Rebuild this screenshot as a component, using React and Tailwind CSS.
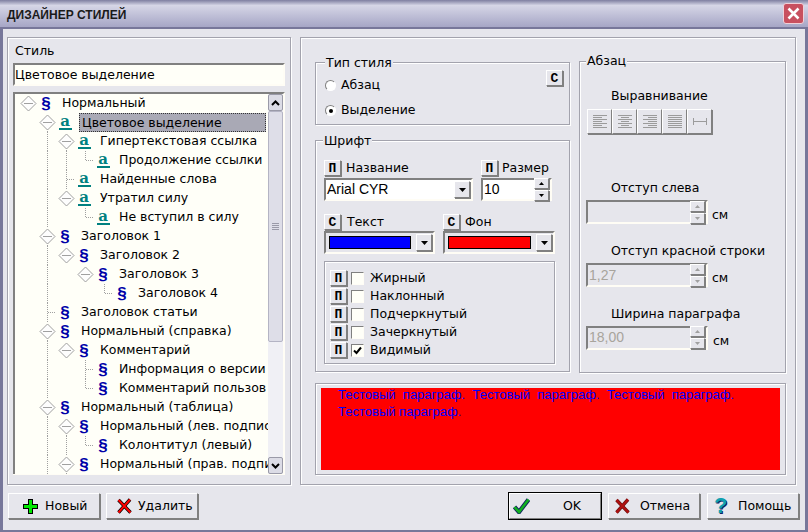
import React from 'react';

const raised = 'border border-t-white border-l-white border-r-[#808080] border-b-[#808080] shadow-[1px_1px_0_#808080] bg-[#e6e6ec]';
const sunken = 'border-2 border-t-[#808080] border-l-[#808080] border-r-[#fffdf5] border-b-[#fffdf5]';
const groupBox = 'relative border border-[#a3a3ad] shadow-[inset_1px_1px_0_#fff,1px_1px_0_#fff]';

const rows = [
  { t: 'Нормальный', k: 's', l: 0, n: true },
  { t: 'Цветовое выделение', k: 'a', l: 1, n: true, sel: true },
  { t: 'Гипертекстовая ссылка', k: 'a', l: 2, n: true },
  { t: 'Продолжение ссылки', k: 'a', l: 3 },
  { t: 'Найденные слова', k: 'a', l: 2 },
  { t: 'Утратил силу', k: 'a', l: 2, n: true },
  { t: 'Не вступил в силу', k: 'a', l: 3 },
  { t: 'Заголовок 1', k: 's', l: 1, n: true },
  { t: 'Заголовок 2', k: 's', l: 2, n: true },
  { t: 'Заголовок 3', k: 's', l: 3, n: true },
  { t: 'Заголовок 4', k: 's', l: 4 },
  { t: 'Заголовок статьи', k: 's', l: 1 },
  { t: 'Нормальный (справка)', k: 's', l: 1, n: true },
  { t: 'Комментарий', k: 's', l: 2, n: true },
  { t: 'Информация о версии', k: 's', l: 3 },
  { t: 'Комментарий пользов', k: 's', l: 3 },
  { t: 'Нормальный (таблица)', k: 's', l: 1, n: true },
  { t: 'Нормальный (лев. подпис', k: 's', l: 2, n: true },
  { t: 'Колонтитул (левый)', k: 's', l: 3 },
  { t: 'Нормальный (прав. подпи', k: 's', l: 2, n: true },
];

// does the guide line of this level carry on below row i
const hasNext = (i, level) => {
  if (level === 0) return false;
  for (let j = i + 1; j < rows.length; j++) {
    if (rows[j].l === level) return true;
    if (rows[j].l < level) return false;
  }
  return true;
};

const Cell = ({ type, down }) => (
  <svg width="19" height="19" className="shrink-0" shapeRendering="crispEdges">
    <g stroke="#a0a0a0" strokeDasharray="1 1" fill="none">
      {type === 'guide' && <path d="M9.5 0V19" />}
      {type === 'leaf' && <path d={down ? 'M9.5 0V19M10 9.5H17' : 'M9.5 0V9.5H17'} />}
      {type === 'node' && down && <path d="M9.5 16V19" />}
    </g>
    {type === 'node' && (
      <g shapeRendering="auto" stroke="#a0a0a0" fill="#fdfdfd">
        <polygon points="2,9.5 9.5,2 17,9.5 9.5,17" />
        <path d="M5 9.5H14" />
      </g>
    )}
  </svg>
);

const TreeRow = ({ row, i }) => {
  const cells = [];
  for (let c = 1; c < row.l; c++) cells.push(<Cell key={c} type={hasNext(i, c) ? 'guide' : 'none'} />);
  return (
    <div className="flex h-[19px] items-center">
      {row.l > 0 && <Cell type="none" />}
      {cells}
      <Cell type={row.n ? 'node' : 'leaf'} down={hasNext(i, row.l)} />
      <span className="flex w-[16px] shrink-0 justify-center">
        {row.k === 's' ? (
          <span className="font-['Liberation_Sans',sans-serif] text-[17px] leading-none font-bold text-[#0000a8]">§</span>
        ) : (
          <span className="block h-[15px] w-[13px] border-b-2 border-[#008080] text-center font-['DejaVu_Serif',serif] text-[15px] leading-[13px] font-bold text-[#008080]">a</span>
        )}
      </span>
      <span className={`ml-[6px] h-[19px] pl-[2px] leading-[18px] whitespace-nowrap ${row.sel ? 'mr-[2px] flex-1 border border-dotted border-[#333] bg-[#a9a9b5] pl-[1px] leading-[16px]' : 'shrink-0'}`}>{row.t}</span>
    </div>
  );
};

const Arrow = ({ d, color = 'black' }) => (
  <svg width="9" height="6" viewBox="0 0 9 6" fill="none" stroke={color} strokeWidth="2"><path d={d} /></svg>
);

const ScrollBtn = ({ d }) => (
  <div className="flex h-[17px] w-[15px] items-center justify-center rounded-[2px] border border-[#9a9aa8] bg-[#dcdce6]">
    <Arrow d={d} />
  </div>
);

const Tiny = ({ up, disabled }) => (
  <div className={`flex h-[11px] w-[15px] items-center justify-center ${raised}`}>
    <svg width="5" height="3" viewBox="0 0 5 3" fill={disabled ? '#a0a0a0' : 'black'}>
      <path d={up ? 'M2.5 0L5 3H0Z' : 'M0 0H5L2.5 3Z'} />
    </svg>
  </div>
);

const Spin = ({ value, disabled, className }) => (
  <div className={`flex items-center justify-between pr-[1px] ${sunken} ${disabled ? '' : 'bg-white'} ${className}`}>
    <span className={`pl-[1px] font-['Liberation_Sans',sans-serif] text-[14px] ${disabled ? 'text-[#a8a49c]' : 'text-black'}`}>{value}</span>
    <div className="flex flex-col gap-[1px]">
      <Tiny up disabled={disabled} />
      <Tiny disabled={disabled} />
    </div>
  </div>
);

const DropBtn = () => (
  <div className={`flex h-[17px] w-[16px] items-center justify-center ${raised}`}>
    <svg width="7" height="4" viewBox="0 0 7 4"><path d="M0 0H7L3.5 4Z" fill="black" /></svg>
  </div>
);

const LetterBtn = ({ c, className = '' }) => (
  <div className={`flex h-[16px] w-[17px] shrink-0 items-center justify-center font-['Liberation_Mono',monospace] text-[13px] leading-none font-bold ${raised} ${className}`}>{c}</div>
);

const ColorCombo = ({ color, className }) => (
  <div className={`flex h-[23px] items-center justify-between pr-[1px] pl-[3px] ${sunken} ${className}`}>
    <div className={`h-[13px] flex-1 border border-black ${color}`} />
    <div className="ml-[5px]"><DropBtn /></div>
  </div>
);

const FontFlag = ({ label, checked }) => (
  <div className="flex h-[18px] items-center">
    <LetterBtn c="П" />
    <div className="ml-[4px] flex h-[13px] w-[13px] items-center justify-center border border-t-[#808080] border-l-[#808080] border-r-[#fffdf5] border-b-[#fffdf5] bg-[#fffff8]">
      {checked && <svg width="9" height="9" viewBox="0 0 9 9" fill="none" stroke="black" strokeWidth="2"><path d="M1 4.5L3.5 7L8 1.5" /></svg>}
    </div>
    <span className="ml-[6px]">{label}</span>
  </div>
);

const Radio = ({ label, on }) => (
  <div className="flex h-[25px] items-center">
    <div className="flex h-[11px] w-[11px] items-center justify-center rounded-full border border-t-[#808080] border-l-[#808080] border-r-white border-b-white bg-white">
      {on && <div className="h-[4px] w-[4px] rounded-full bg-black" />}
    </div>
    <span className="ml-[5px]">{label}</span>
  </div>
);

const AlignIcon = ({ lines }) => (
  <svg width="16" height="15" stroke="#9b9b9b" shapeRendering="crispEdges">
    {lines.map(([a, b], i) => <path key={i} d={`M${a} ${1.5 + i * 2}H${b}`} />)}
  </svg>
);

const alignIcons = [
  [[1, 15], [1, 10], [1, 15], [1, 10], [1, 15], [1, 10], [1, 15]],
  [[1, 15], [4, 12], [1, 15], [4, 12], [1, 15], [4, 12], [1, 15]],
  [[1, 15], [6, 15], [1, 15], [6, 15], [1, 15], [6, 15], [1, 15]],
  [[1, 15], [1, 15], [1, 15], [1, 15], [1, 15], [1, 15], [1, 15]],
];

const ParaField = ({ label, value, unitClass = 'ml-[4px]' }) => (
  <div>
    <div className="h-[16px] pl-[25px] leading-[18px]">{label}</div>
    <div className="mt-[5px] flex items-center">
      <Spin value={value} disabled className="h-[24px] w-[122px]" />
      <span className={`${unitClass} mt-[6px]`}>см</span>
    </div>
  </div>
);

const Button = ({ icon, children, className = '', textClass = '' }) => (
  <div className={`flex h-[26px] w-[92px] items-center ${raised} ${className}`}>
    {icon}
    <span className={`pt-[1px] ${textClass}`}>{children}</span>
  </div>
);

const PlusIcon = () => (
  <svg width="17" height="17" viewBox="0 0 17 17" className="ml-[13px]" shapeRendering="crispEdges">
    <path d="M6.5 1.5H10.5V6.5H15.5V10.5H10.5V15.5H6.5V10.5H1.5V6.5H6.5Z" fill="#00e800" stroke="black" />
  </svg>
);

const CrossIcon = ({ color, stroke, className }) => (
  <svg width="15" height="16" viewBox="0 0 15 16" className={className}>
    <path d="M1.5 2L13.5 14.5M13 1.5L1.5 14.5" stroke={stroke} strokeWidth="3.4" fill="none" />
    <path d="M1.5 2L13.5 14.5M13 1.5L1.5 14.5" stroke={color} strokeWidth="2" fill="none" />
  </svg>
);

const CheckIcon = () => (
  <svg width="17" height="16" viewBox="0 0 17 16" className="ml-[3px]">
    <path d="M1.5 9L6 14L15.5 1.5" stroke="#102060" strokeWidth="4.4" fill="none" />
    <path d="M1.5 9L6 14L15.5 1.5" stroke="#10b020" strokeWidth="2.6" fill="none" />
  </svg>
);

export default function App() {
  return (
    <div className="flex h-[532px] w-[808px] flex-col overflow-hidden bg-[#e6e6ec] font-['DejaVu_Sans',sans-serif] text-[12.5px] text-black">
      <div className="flex h-[29px] shrink-0 items-center justify-between border-b-2 border-[#77779a] bg-gradient-to-b from-[#7f7fa0] via-[#d6d6e6] via-20% to-[#a6a6c6] pr-[4px] pl-[7px]">
        <span className="mt-[3px] font-['Liberation_Sans',sans-serif] text-[12px] font-bold text-[#1a1a1a]">ДИЗАЙНЕР СТИЛЕЙ</span>
        <div className="flex h-[21px] w-[21px] items-center justify-center rounded-[3px] border border-[#f0d0d8] bg-[#c8505f]">
          <svg width="13" height="13" viewBox="0 0 13 13"><path d="M1.5 1.5L11.5 11.5M11.5 1.5L1.5 11.5" stroke="white" strokeWidth="2.6" /></svg>
        </div>
      </div>

      <div className="flex flex-1 flex-col border-x-[3px] border-b-2 border-[#77779a] pl-[4px]">
        <div className="mt-[8px] flex gap-[9px]">
          {/* style tree */}
          <div className={`${groupBox} flex h-[448px] w-[284px] flex-col px-[5px]`}>
            <div className="mt-[4px] h-[20px] pl-[2px] leading-[18px]">Стиль</div>
            <div className={`mt-[1px] h-[23px] leading-[19px] ${sunken} bg-[#fffff8]`}>Цветовое выделение</div>
            <div className="mt-[6px] flex h-[382px] border-x-2 border-t-2 border-t-[#808080] border-l-[#808080] border-r-[#fffdf5] bg-[#fffff8] shadow-[0_1px_0_#fffdf5]">
              <div className="w-[254px] overflow-hidden pl-[4px]">
                {rows.map((row, i) => <TreeRow key={row.t} row={row} i={i} />)}
              </div>
              <div className="flex w-[15px] flex-col bg-[#f0f0f5]">
                <ScrollBtn d="M1 5L4.5 1.5L8 5" />
                <div className="flex-1">
                  <div className="flex h-[231px] items-center justify-center rounded-[2px] border border-[#b4b4c4] bg-[#dedee8]">
                    <div className="flex flex-col gap-[1px]">
                      <div className="h-[1px] w-[7px] bg-[#9a9aa8]" />
                      <div className="h-[1px] w-[7px] bg-[#9a9aa8]" />
                      <div className="h-[1px] w-[7px] bg-[#9a9aa8]" />
                      <div className="h-[1px] w-[7px] bg-[#9a9aa8]" />
                    </div>
                  </div>
                </div>
                <ScrollBtn d="M1 1L4.5 4.5L8 1" />
              </div>
            </div>
          </div>

          {/* style settings */}
          <div className={`${groupBox} h-[448px] w-[496px] pl-[14px]`}>
            <div className="flex gap-[9px]">
              <div className="mt-[24px] w-[255px]">
                <div className={`${groupBox} flex h-[63px] items-start justify-between pt-[7px] pr-[6px] pl-[9px]`}>
                  <span className="absolute -top-[8px] left-[9px] bg-[#e6e6ec] px-[1px] leading-[15px]">Тип стиля</span>
                  <div className="mt-[3px]">
                    <Radio label="Абзац" />
                    <Radio label="Выделение" on />
                  </div>
                  <LetterBtn c="С" />
                </div>

                <div className={`${groupBox} mt-[15px] h-[232px] pt-[19px] pl-[8px]`}>
                  <span className="absolute -top-[8px] left-[7px] bg-[#e6e6ec] px-[1px] leading-[15px]">Шрифт</span>
                  <div className="flex gap-[8px]">
                    <div className="w-[149px]">
                      <div className="flex h-[16px] items-center"><LetterBtn c="П" /><span className="mt-[1px] ml-[5px]">Название</span></div>
                      <div className={`mt-[2px] flex h-[23px] items-center justify-between pr-[1px] ${sunken} bg-white`}>
                        <span className="pl-[1px] font-['Liberation_Sans',sans-serif] text-[14px]">Arial CYR</span>
                        <DropBtn />
                      </div>
                    </div>
                    <div className="w-[71px]">
                      <div className="flex h-[16px] items-center"><LetterBtn c="П" /><span className="mt-[1px] ml-[4px]">Размер</span></div>
                      <Spin value="10" className="mt-[2px] h-[23px]" />
                    </div>
                  </div>
                  <div className="mt-[13px] flex gap-[8px]">
                    <div className="w-[111px]">
                      <div className="flex h-[16px] items-center"><LetterBtn c="С" /><span className="ml-[6px]">Текст</span></div>
                      <ColorCombo color="bg-[#0000ff]" className="mt-[1px]" />
                    </div>
                    <div className="w-[112px]">
                      <div className="flex h-[16px] items-center"><LetterBtn c="С" /><span className="ml-[5px]">Фон</span></div>
                      <ColorCombo color="bg-[#ff0000]" className="mt-[1px]" />
                    </div>
                  </div>
                  <div className="mt-[7px] h-[103px] w-[231px] border border-[#a3a3ad] pt-[7px] pl-[5px] shadow-[inset_1px_1px_0_#fff,1px_1px_0_#fff]">
                    <FontFlag label="Жирный" />
                    <FontFlag label="Наклонный" />
                    <FontFlag label="Подчеркнутый" />
                    <FontFlag label="Зачеркнутый" />
                    <FontFlag label="Видимый" checked />
                  </div>
                </div>
              </div>

              <div className={`${groupBox} mt-[23px] h-[312px] w-[207px] pt-[25px] pl-[6px]`}>
                <span className="absolute -top-[9px] left-[6px] bg-[#e6e6ec] px-[1px] leading-[15px]">Абзац</span>
                <div className="h-[16px] pl-[25px] leading-[18px]">Выравнивание</div>
                <div className="mt-[6px] flex pl-[1px]">
                  {alignIcons.map((lines, i) => (
                    <div key={i} className={`flex h-[25px] w-[25px] items-center justify-center ${raised}`}><AlignIcon lines={lines} /></div>
                  ))}
                  <div className={`flex h-[25px] w-[25px] items-center justify-center ${raised}`}>
                    <svg width="16" height="9" stroke="#9b9b9b" strokeWidth="1" shapeRendering="crispEdges"><path d="M1.5 1V8M14.5 1V8M1 4.5H15" /></svg>
                  </div>
                </div>
                <div className="mt-[45px] flex flex-col gap-[17px]">
                  <ParaField label="Отступ слева" value="" />
                  <ParaField label="Отступ красной строки" value="1,27" />
                  <ParaField label="Ширина параграфа" value="18,00" unitClass="ml-[5px]" />
                </div>
              </div>
            </div>

            {/* preview */}
            <div className={`${groupBox} mt-[10px] h-[92px] w-[471px] px-[5px] pt-[4px]`}>
              <div className="flow-root h-[82px] w-[459px] bg-[#ff0000] pl-[17px]">
                <p className="-mt-[2px] w-[396px] text-justify font-['Liberation_Sans',sans-serif] text-[13px] leading-[17px] text-[#0000ff]">
                  Тестовый параграф. Тестовый параграф. Тестовый параграф. Тестовый параграф.
                </p>
              </div>
            </div>
          </div>
        </div>

        <div className="mt-[8px] flex pl-[1px]">
          <div className="flex gap-[6px]">
            <Button icon={<PlusIcon />} textClass="ml-[6px]">Новый</Button>
            <Button icon={<CrossIcon color="#ff0000" stroke="black" className="ml-[10px]" />} textClass="ml-[6px]">Удалить</Button>
          </div>
          <div className="ml-[311px] flex gap-[7px]">
            <Button icon={<CheckIcon />} className="outline outline-black" textClass="ml-[33px]">OK</Button>
            <Button icon={<CrossIcon color="#b01010" stroke="#701010" className="ml-[6px]" />} textClass="ml-[10px]">Отмена</Button>
            <Button
              icon={<span className="ml-[6px] w-[14px] font-['Liberation_Sans',sans-serif] text-[22px] leading-none font-bold text-[#10a0b0] [text-shadow:1px_1px_0_#102060]">?</span>}
              textClass="ml-[10px]"
            >
              Помощь
            </Button>
          </div>
        </div>
      </div>
    </div>
  );
}
